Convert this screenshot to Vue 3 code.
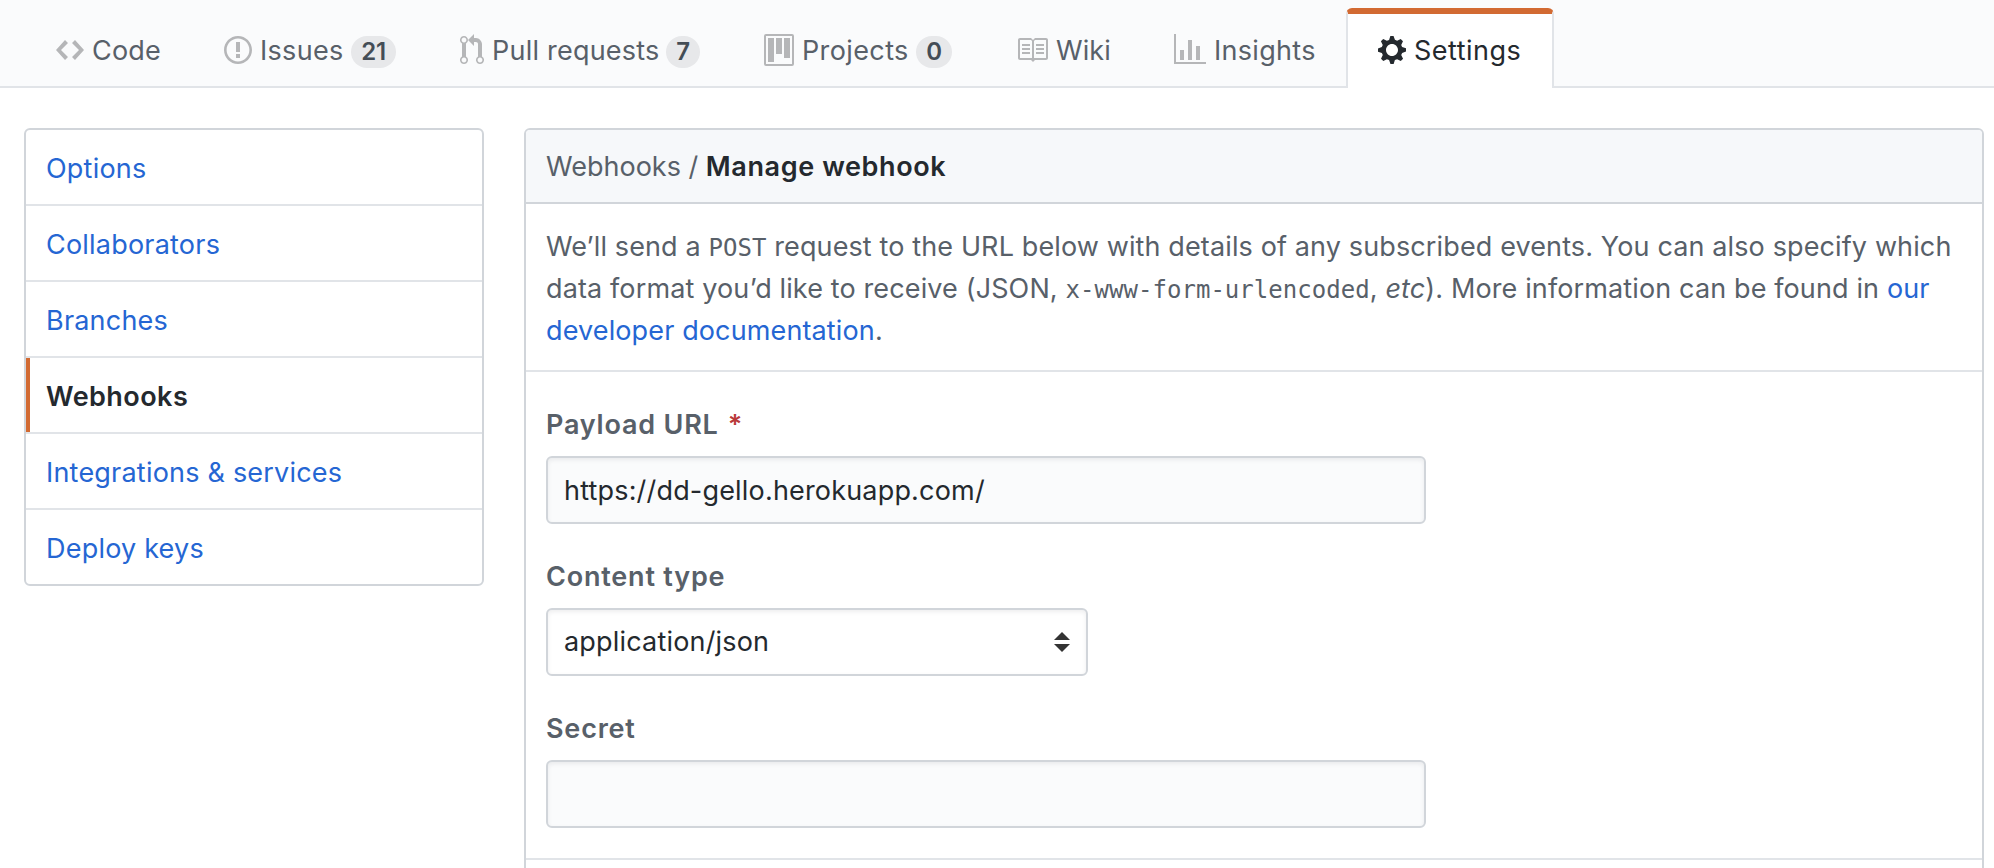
<script setup>
import { ref } from 'vue'

const tabs = [
  { name: 'Code', width: 168, track: 0.2, icon: 14, path: 'M9.5 3L8 4.5 11.5 8 8 11.5 9.5 13 14 8 9.5 3zm-5 0L0 8l4.5 5L6 11.5 2.5 8 6 4.5 4.5 3z' },
  { name: 'Issues', width: 236, track: 0.3, count: 21, icon: 14, path: 'M7 2.3c3.14 0 5.7 2.56 5.7 5.7s-2.56 5.7-5.7 5.7A5.71 5.71 0 0 1 1.3 8c0-3.14 2.56-5.7 5.7-5.7zM7 1C3.14 1 0 4.14 0 8s3.14 7 7 7 7-3.14 7-7-3.14-7-7-7zm1 3H6v5h2V4zm0 6H6v2h2v-2z' },
  { name: 'Pull requests', width: 304, track: 0.22, count: 7, icon: 12, path: 'M11 11.28V5c-.03-.78-.34-1.47-.94-2.06C9.46 2.35 8.78 2.03 8 2H7V0L4 3l3 3V4h1c.27.02.48.11.69.31.21.2.3.42.31.69v6.28A1.993 1.993 0 0 0 10 15a1.993 1.993 0 0 0 1-3.72zm-1 2.92c-.66 0-1.2-.55-1.2-1.2 0-.65.55-1.2 1.2-1.2.65 0 1.2.55 1.2 1.2 0 .65-.55 1.2-1.2 1.2zM4 3c0-1.11-.89-2-2-2a1.993 1.993 0 0 0-1 3.72v6.56A1.993 1.993 0 0 0 2 15a1.993 1.993 0 0 0 1-3.72V4.72c.59-.34 1-.98 1-1.72zm-.8 10c0 .66-.55 1.2-1.2 1.2-.65 0-1.2-.55-1.2-1.2 0-.65.55-1.2 1.2-1.2.65 0 1.2.55 1.2 1.2zM2 4.2C1.34 4.2.8 3.65.8 3c0-.65.55-1.2 1.2-1.2.65 0 1.2.55 1.2 1.2 0 .65-.55 1.2-1.2 1.2z' },
  { name: 'Projects', width: 252, track: 0.38, count: 0, icon: 15, path: 'M1 0h13a1 1 0 0 1 1 1v14a1 1 0 0 1-1 1H1a1 1 0 0 1-1-1V1a1 1 0 0 1 1-1zm0 1v14h13V1H1zm1 1h3v12H2V2zm4 0h3v8H6V2zm4 0h3v10h-3V2z' },
  { name: 'Wiki', width: 158, track: 0.1, icon: 16, path: 'M3 5h4v1H3V5zm0 3h4V7H3v1zm0 2h4V9H3v1zm11-5h-4v1h4V5zm0 2h-4v1h4V7zm0 2h-4v1h4V9zm2-6v9c0 .55-.45 1-1 1H9.5l-1 1-1-1H2c-.55 0-1-.45-1-1V3c0-.55.45-1 1-1h5.5l1 1 1-1H15c.55 0 1 .45 1 1zm-8 .5L7.5 3H2v9h6V3.5zm7-.5H9.5l-.5.5V12h6V3z' },
  { name: 'Insights', width: 204, track: 0.3, icon: 16, path: 'M16 14v1H0V0h1v14h15zM5 13H3V8h2v5zm4 0H7V3h2v10zm4 0h-2V6h2v7z' },
  { name: 'Settings', width: 208, track: 0.5, icon: 14, active: true, path: 'M14 8.77v-1.6l-1.94-.64-.45-1.09.88-1.84-1.13-1.13-1.81.91-1.09-.45-.69-1.92h-1.6l-.63 1.94-1.11.45-1.84-.88-1.13 1.13.91 1.81-.45 1.09L0 7.23v1.59l1.94.64.45 1.09-.88 1.84 1.13 1.13 1.81-.91 1.09.45.69 1.92h1.59l.63-1.94 1.11-.45 1.84.88 1.13-1.13-.92-1.81.47-1.09L14 8.75v.02zM7 11c-1.66 0-3-1.34-3-3s1.34-3 3-3 3 1.34 3 3-1.34 3-3 3z' },
]

const menu = ['Options', 'Collaborators', 'Branches', 'Webhooks', 'Integrations & services', 'Deploy keys']
const current = 'Webhooks'

const payloadUrl = ref('https://dd-gello.herokuapp.com/')
const contentType = ref('application/json')
const secret = ref('')
</script>

<template>
  <div class="page">
    <nav class="reponav">
      <a
        v-for="tab in tabs"
        :key="tab.name"
        class="tab"
        :class="{ active: tab.active }"
        :style="{ width: tab.width + 'px' }"
      >
        <svg class="icon" :width="tab.icon * 2" height="32" :viewBox="`0 0 ${tab.icon} 16`">
          <path fill-rule="evenodd" :d="tab.path" />
        </svg>
        <span class="tab-name" :style="{ letterSpacing: tab.track + 'px' }">{{ tab.name }}</span>
        <span v-if="tab.count !== undefined" class="counter">{{ tab.count }}</span>
      </a>
    </nav>

    <div class="columns">
      <aside class="menu">
        <a v-for="item in menu" :key="item" class="menu-item" :class="{ selected: item === current }">{{ item }}</a>
      </aside>

      <main class="box">
        <h3 class="box-header"><a>Webhooks</a> / <strong>Manage webhook</strong></h3>
        <p class="intro">
          We’ll send a <code>POST</code> request to the URL below with details of any subscribed events. You can also specify which<br />
          data format you’d like to receive (JSON, <code>x-www-form-urlencoded</code>, <em>etc</em>). More information can be found in <a>our<br />
          developer documentation</a>.
        </p>
        <form class="form">
          <div class="group">
            <label class="label">Payload URL <span class="required">*</span></label>
            <input v-model="payloadUrl" class="field" type="text" />
          </div>
          <div class="group">
            <label class="label">Content type</label>
            <div class="select">
              <span>{{ contentType }}</span>
              <svg width="16" height="20" viewBox="0 0 16 20" fill="#333">
                <path d="M8 0l8 8H0zM0 12h16l-8 8z" />
              </svg>
            </div>
          </div>
          <div class="group">
            <label class="label">Secret</label>
            <input v-model="secret" class="field" type="text" />
          </div>
        </form>
      </main>
    </div>
  </div>
</template>

<style>
body {
  margin: 0;
  background: #fff;
  overflow: hidden;
}
</style>

<style scoped>
.page {
  box-sizing: border-box;
  width: 1994px;
  height: 868px;
  overflow: hidden;
  font-family: Inter, "Liberation Sans", sans-serif;
  font-size: 27px;
  line-height: 42px;
  color: #586069;
}
.page * {
  box-sizing: border-box;
}
.reponav {
  display: flex;
  align-items: flex-end;
  height: 88px;
  padding-left: 24px;
  background: linear-gradient(#e1e4e8, #e1e4e8) bottom / 100% 2px no-repeat #fafbfc;
}
.tab {
  display: flex;
  align-items: flex-start;
  height: 80px;
  padding: 26px 32px 0;
  white-space: nowrap;
}
.tab.active {
  padding: 20px 30px 0;
  border: solid #e1e4e8;
  border-width: 6px 2px 0;
  border-top-color: #d26a32;
  border-radius: 6px 6px 0 0;
  background: #fff;
  color: #24292e;
}
.icon {
  flex: none;
  fill: currentColor;
  margin-right: 8px;
  color: #b5b6b8;
}
.tab.active .icon {
  color: #24292e;
}
.tab-name {
  margin-top: -4px;
}
.counter {
  height: 32px;
  margin: 2px 0 0 auto;
  padding: 0 10px;
  border-radius: 20px;
  background: #e7e8ea;
  color: #444d56;
  font-size: 24px;
  font-weight: 600;
  line-height: 31px;
  letter-spacing: -0.2px;
}
.columns {
  display: flex;
  align-items: flex-start;
  gap: 40px;
  padding: 40px 10px 0 24px;
}
.menu {
  flex: none;
  width: 460px;
  border: 2px solid #d1d5da;
  border-radius: 6px;
  overflow: hidden;
  letter-spacing: 0.21px;
}
.menu-item {
  display: block;
  height: 76px;
  padding: 18px 20px 0;
  border-bottom: 2px solid #e1e4e8;
  color: #2566d3;
}
.menu-item:last-child {
  height: 74px;
  border-bottom: 0;
}
.menu-item.selected {
  background: linear-gradient(#d26a32, #d26a32) left / 4px 100% no-repeat;
  color: #24292e;
  font-weight: 600;
  letter-spacing: 0.45px;
}
.box {
  flex: 1;
  height: 780px;
  border: 2px solid #d1d5da;
  border-radius: 6px;
  overflow: hidden;
}
.box-header {
  height: 74px;
  margin: 0;
  padding: 16px 20px 0;
  border-bottom: 2px solid #d1d5da;
  background: #f6f8fa;
  font-size: 27px;
  font-weight: 400;
}
.box-header strong {
  color: #24292e;
  font-weight: 600;
  letter-spacing: 0.6px;
}
.intro {
  height: 168px;
  margin: 0;
  padding: 22px 20px 0;
  border-bottom: 2px solid #e1e4e8;
  letter-spacing: 0.125px;
  white-space: nowrap;
}
.intro a {
  color: #2566d3;
}
code {
  font-family: "DejaVu Sans Mono", "Liberation Mono", monospace;
  font-size: 24px;
  line-height: 1;
  letter-spacing: 0.04px;
}
.form {
  display: flex;
  flex-direction: column;
  gap: 20px;
  height: 488px;
  padding: 32px 20px 0;
  border-bottom: 2px solid #e1e4e8;
}
.group {
  height: 132px;
}
.label {
  display: block;
  height: 52px;
  font-weight: 600;
  letter-spacing: 0.8px;
}
.required {
  margin-left: 1.5px;
  color: #b93a3a;
}
.field,
.select {
  display: flex;
  align-items: center;
  width: 880px;
  height: 68px;
  margin: 0;
  padding: 0 16px;
  border: 2px solid #d1d5da;
  border-radius: 6px;
  outline: none;
  background: #fafbfc;
  box-shadow: inset 0 2px 4px rgba(27, 31, 35, 0.075);
  color: #24292e;
  font: inherit;
  letter-spacing: 0.18px;
}
.select {
  justify-content: space-between;
  width: 542px;
  background: #fff;
}
</style>
